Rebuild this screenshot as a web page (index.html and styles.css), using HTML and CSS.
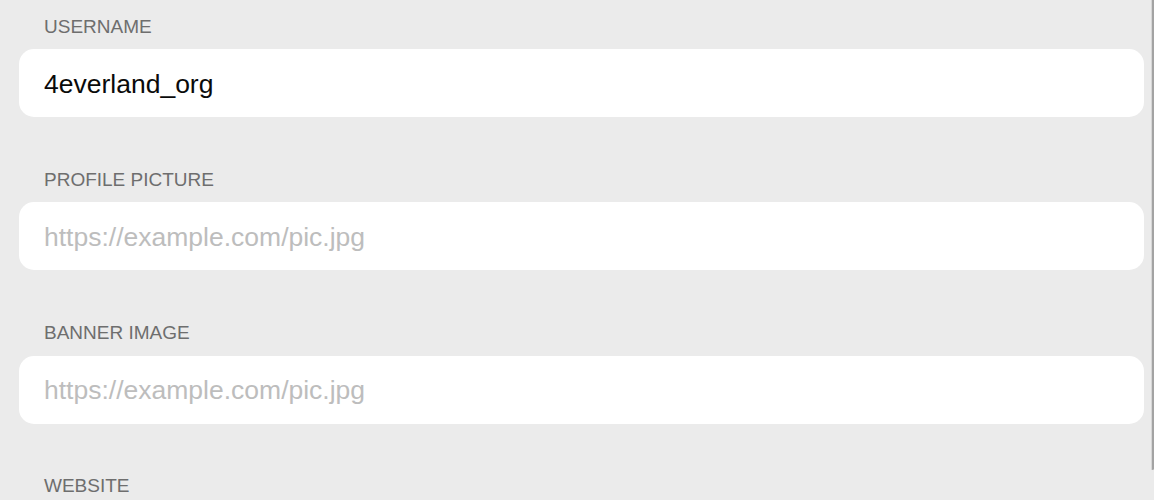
FILE: index.html
```html
<!DOCTYPE html>
<html lang="en">
<head>
<meta charset="utf-8">
<title>Profile</title>
<link rel="stylesheet" href="styles.css">
</head>
<body>
<form class="form">
  <div class="field">
    <label class="label" for="username">USERNAME</label>
    <div class="box"><input id="username" class="input" type="text" value="4everland_org"></div>
  </div>
  <div class="field">
    <label class="label" for="picture">PROFILE PICTURE</label>
    <div class="box"><input id="picture" class="input" type="text" placeholder="https://example.com/pic.jpg"></div>
  </div>
  <div class="field">
    <label class="label" for="banner">BANNER IMAGE</label>
    <div class="box"><input id="banner" class="input" type="text" placeholder="https://example.com/pic.jpg"></div>
  </div>
  <div class="field">
    <label class="label" for="website">WEBSITE</label>
    <div class="box"><input id="website" class="input" type="text" placeholder="https://example.com"></div>
  </div>
</form>
<div class="scrollbar"></div>
</body>
</html>
```

FILE: styles.css
```css
html, body {
  margin: 0;
  padding: 0;
  background: #ebebeb;
  overflow: hidden;
  height: 500px;
}

body {
  font-family: "Liberation Sans", Arial, sans-serif;
}

.form {
  display: flex;
  flex-direction: column;
  gap: 52.8px;
  padding: 16.5px 10px 0 19px;
}

.field {
  display: flex;
  flex-direction: column;
  gap: 12.5px;
}

.label {
  display: block;
  font-size: 19px;
  line-height: 20px;
  color: #6e6e6e;
  padding-left: 25px;
}

.box {
  height: 68px;
  background: #ffffff;
  border-radius: 15px;
  display: flex;
  align-items: center;
  padding: 0 25px;
}

.input {
  flex: 1;
  border: none;
  outline: none;
  background: transparent;
  padding: 0;
  margin: 0;
  margin-top: 2px;
  font-family: "Liberation Sans", Arial, sans-serif;
  font-size: 26.5px;
  color: #0a0a0a;
}

.input::placeholder {
  color: #bdbdbd;
}

.scrollbar {
  position: fixed;
  top: 0;
  right: 0;
  width: 2px;
  height: 470px;
  background: #a3a3a3;
  border-left: 1px solid #d6d6d6;
  border-radius: 0 0 2px 2px;
}
```
